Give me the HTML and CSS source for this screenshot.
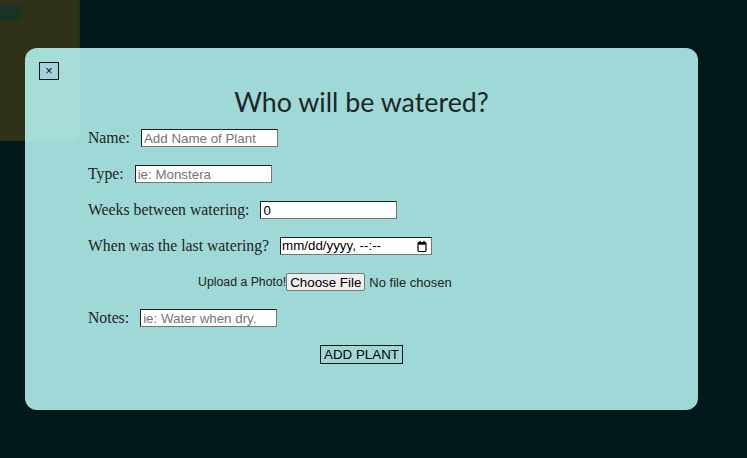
FILE: index.html
```html
<!DOCTYPE html>
<html>
<head>
<meta charset="utf-8">
<link rel="stylesheet" href="styles.css">
</head>
<body>
<div class="card">
  <div class="card-btn"></div>
</div>
<div class="modal">
  <button class="close">×</button>
  <h1 class="title">Who will be watered?</h1>
  <form class="form">
    <div class="row"><label class="lbl">Name:</label><input class="field" type="text" placeholder="Add Name of Plant"></div>
    <div class="row"><label class="lbl">Type:</label><input class="field" type="text" placeholder="ie: Monstera"></div>
    <div class="row"><label class="lbl">Weeks between watering:</label><input class="field" type="number" value="0"></div>
    <div class="row"><label class="lbl">When was the last watering?</label>
      <span class="field date"><span class="date-text">mm/dd/yyyy, --:--</span>
        <svg class="cal" width="10" height="12" viewBox="0 0 10 12"><rect x="1" y="2.5" width="8" height="9" rx="1.2" fill="none" stroke="#000" stroke-width="1.2"/><rect x="1" y="2.5" width="8" height="2.2" fill="#000"/><rect x="2.4" y="0.8" width="1.3" height="2" fill="#000"/><rect x="6.3" y="0.8" width="1.3" height="2" fill="#000"/></svg>
      </span></div>
    <div class="row upload"><span class="up-lbl">Upload a Photo!</span><input class="file" type="file"></div>
    <div class="row"><label class="lbl">Notes:</label><input class="field" type="text" placeholder="ie: Water when dry."></div>
    <div class="actions"><button class="submit" type="button">ADD PLANT</button></div>
  </form>
</div>
</body>
</html>
```
FILE: styles.css
```css
html, body {
  margin: 0;
  padding: 0;
}
body {
  background: #01171a;
  width: 747px;
  height: 458px;
  overflow: hidden;
  position: relative;
}
.card {
  width: 80px;
  height: 141px;
  background: #2f3219;
  border-right: 1px solid #0d3a12;
  border-radius: 0 0 10px 0;
  box-sizing: border-box;
  padding-top: 5px;
}
.card-btn {
  width: 21px;
  height: 16px;
  background: #1b3325;
  border-radius: 0 4px 4px 0;
}
.modal {
  position: absolute;
  left: 25px;
  top: 48px;
  width: 673px;
  height: 362px;
  box-sizing: border-box;
  border-radius: 12px;
  background: rgba(187, 251, 249, 0.85);
  padding: 14px 0 0 14px;
}
.close {
  display: block;
  width: 20px;
  height: 18px;
  padding: 0;
  margin: 0;
  border: 1px solid #111;
  background: #a4d3e0;
  color: #111;
  font: 13px "Liberation Sans", Arial, sans-serif;
  line-height: 16px;
}
.title {
  margin: 5px 14px 0 0;
  text-align: center;
  font: 400 26.8px/34px Lato, sans-serif;
  color: #1c2626;
}
.form {
  margin: 10px 0 0 49px;
}
.row {
  display: flex;
  align-items: center;
  height: 18px;
  gap: 11px;
  margin-bottom: 18px;
}
.lbl {
  font: 15.75px/18px "Liberation Serif", "DejaVu Serif", serif;
  color: #222;
}
.field {
  box-sizing: border-box;
  width: 137px;
  height: 18px;
  margin: 0;
  padding: 1px 2px;
  border: 1px inset #767676;
  background: #fff;
  font: 13.33px "Liberation Sans", Arial, sans-serif;
  color: #000;
  outline: none;
}
.field::placeholder {
  color: #757575;
}
.date {
  width: 152px;
  display: flex;
  align-items: center;
  padding: 0 4px 0 1px;
  line-height: 16px;
}
.date-text {
  flex: 1;
}
.cal {
  display: block;
}
.upload {
  gap: 0;
  padding-left: 110px;
}
.up-lbl {
  font: 12.3px "Liberation Sans", Arial, sans-serif;
  color: #222;
}
.file {
  font: 13px "Liberation Sans", Arial, sans-serif;
  color: #222;
}
.file::file-selector-button {
  font: 13.33px "Liberation Sans", Arial, sans-serif;
  height: 18px;
  padding: 0 3px;
  margin: 0 4px 0 0;
  border: 1px solid #767676;
  border-radius: 2px;
  background: #efefef;
  color: #000;
}
.actions {
  display: flex;
  justify-content: center;
  margin: 11px 0 0 -49px;
  padding-right: 14px;
}
.submit {
  box-sizing: border-box;
  width: 83px;
  height: 19px;
  padding: 0;
  border: 1px solid #111;
  background: transparent;
  color: #000;
  font: 13.33px "Liberation Sans", Arial, sans-serif;
}
```
